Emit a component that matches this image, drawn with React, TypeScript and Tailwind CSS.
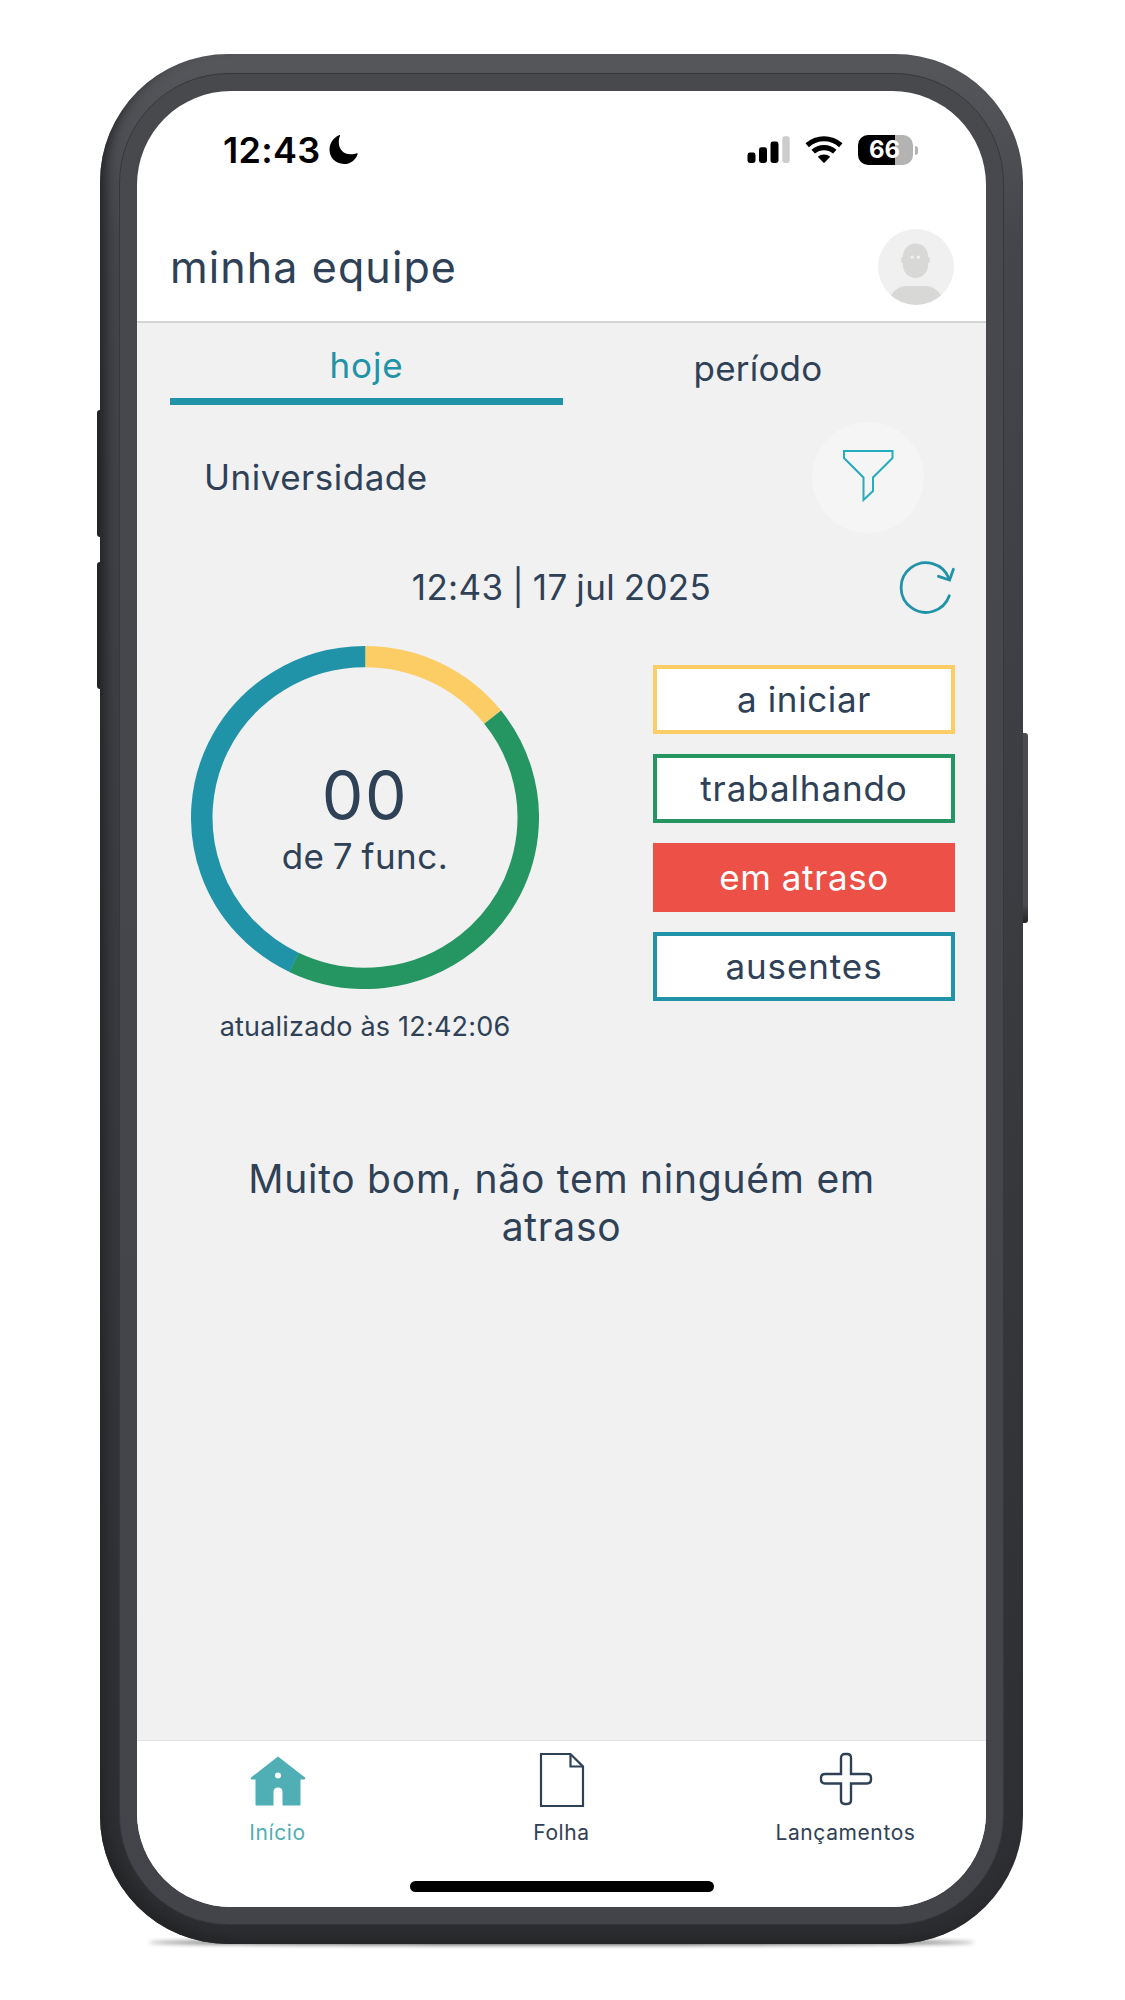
import React from "react";

const segments = [
  { color: "#fccd65", from: 0, size: 1 },
  { color: "#259661", from: 1, size: 3 },
  { color: "#2093a8", from: 4, size: 3 },
];

const filters = [
  { label: "a iniciar", style: "border-[#fccd65] bg-white tracking-[0.6px]" },
  { label: "trabalhando", style: "border-[#259661] bg-white tracking-[0.9px]" },
  { label: "em atraso", style: "border-[#ec5046] bg-[#ec5046] text-white tracking-[0.6px]" },
  { label: "ausentes", style: "border-[#2093a8] bg-white tracking-[0.9px]" },
];

const StatusBar: React.FC = () => {
  return (
    <div className="flex h-[118px] shrink-0 items-center justify-between pr-[68px] pl-[86px] text-black">
      <div className="flex items-center gap-[8px]">
        <span className="text-[36px] leading-none font-semibold tracking-[0.3px]">12:43</span>
        <svg width="29" height="30" viewBox="0 0 29 30">
          <path
            d="M11 0.8C10 3 9.8 5 9.8 7.5C9.8 14.5 14.8 19.3 21.5 19.3C24 19.3 26 19 27.6 18.3C28.3 18 28.9 18.5 28.6 19.2C26.5 25.3 21.3 29 15 29C6.6 29 0.5 22.8 0.5 14.6C0.5 8.3 4.2 2.7 10 0.2C10.7 -0.1 11.3 0.2 11 0.8Z"
            fill="#000"
          />
        </svg>
      </div>
      <div className="flex items-center">
        <svg width="44" height="28" viewBox="0 0 44 28">
          <rect x="0.5" y="16.5" width="8" height="10.5" rx="2.4" />
          <rect x="12" y="11.3" width="8" height="15.7" rx="2.4" />
          <rect x="23.5" y="5.5" width="8" height="21.5" rx="2.4" />
          <rect x="35.3" y="0.3" width="7.4" height="26.7" rx="2.4" fill="#ccc" />
        </svg>
        <svg className="ml-[14px]" width="38" height="28" viewBox="0 0 38 28">
          <g fill="none" stroke="#000" strokeWidth="5.2">
            <path d="M2.2 9.2C12 0.6 26 0.6 35.8 9.2" />
            <path d="M8.2 15.6C14.4 10.2 23.6 10.2 29.8 15.6" />
          </g>
          <path d="M12.8 20.7C16.4 17.6 21.6 17.6 25.2 20.7L19.7 26.6Q19 27.3 18.3 26.6Z" />
        </svg>
        <div className="ml-[15px] flex h-[30px] w-[55px] items-center justify-center rounded-[10px] bg-linear-to-r from-black from-67% to-[#b3b3b3] to-67% pr-[2px]">
          <span className="text-[24px] leading-none font-bold text-white">66</span>
        </div>
        <div className="ml-[2px] h-[9px] w-[3px] rounded-r-full bg-[#b3b3b3]" />
      </div>
    </div>
  );
};

const Avatar: React.FC = () => {
  return (
    <svg width="76" height="76" viewBox="0 0 76 76">
      <clipPath id="avatar">
        <circle cx="38" cy="38" r="38" />
      </clipPath>
      <g clipPath="url(#avatar)">
        <rect width="76" height="76" fill="#f0f0f0" />
        <g fill="#d8d8d6">
          <rect x="25" y="14.5" width="25" height="34.5" rx="12.5" />
          <ellipse cx="25" cy="31" rx="2" ry="3" />
          <ellipse cx="50" cy="31" rx="2" ry="3" />
          <path d="M12 68C16 61 21 57 28 57H48C55 57 60 61 64 68V76H12Z" />
        </g>
        <circle cx="34.2" cy="28.3" r="1.7" fill="#f0f0f0" />
        <circle cx="40.4" cy="28.3" r="1.7" fill="#f0f0f0" />
      </g>
    </svg>
  );
};

const Header: React.FC = () => {
  return (
    <header className="flex h-[114px] shrink-0 items-center justify-between border-b-2 border-[#d4d5d5] pt-1 pr-[32px] pl-[33px]">
      <h1 className="text-[43px] leading-none tracking-[1.1px]">minha equipe</h1>
      <Avatar />
    </header>
  );
};

const Tabs: React.FC = () => {
  return (
    <div className="mx-[33px] grid h-[82px] shrink-0 grid-cols-[393px_1fr] text-[35px] leading-none">
      <button className="flex items-center justify-center border-b-[7px] border-[#2093a8] pt-[10px] tracking-[0.8px] text-[#2093a8]">
        hoje
      </button>
      <button className="flex items-center justify-center pt-[9px] tracking-[0.2px]">período</button>
    </div>
  );
};

const Donut: React.FC = () => {
  const length = 2 * Math.PI * 163.25;

  return (
    <div className="relative h-[343px] w-[348px]">
      <svg width="348" height="343" viewBox="0 0 348 348" preserveAspectRatio="none">
        {segments.map((s) => (
          <circle
            key={s.color}
            cx="174"
            cy="174"
            r="163.25"
            fill="none"
            stroke={s.color}
            strokeWidth="21.5"
            strokeDasharray={`${(length * s.size) / 7} ${length}`}
            transform={`rotate(${(360 * s.from) / 7 - 90} 174 174)`}
          />
        ))}
      </svg>
      <div className="absolute inset-0 flex flex-col items-center justify-center gap-[10px]">
        <span className="text-[66px] leading-[66px] tracking-[1.5px]">00</span>
        <span className="text-[35px] leading-[36px] tracking-[0.5px] [word-spacing:-2px]">de 7 func.</span>
      </div>
    </div>
  );
};

const Content: React.FC = () => {
  return (
    <main className="flex min-h-0 flex-1 flex-col bg-[#f1f1f1]">
      <Tabs />
      <div className="mt-[17px] flex h-[111px] items-center justify-between pr-[62px] pl-[67px]">
        <span className="text-[35px] leading-none tracking-[0.5px]">Universidade</span>
        <button className="flex h-[111px] w-[112px] items-center justify-center rounded-full bg-[#f5f5f5] pb-[3px]">
          <svg width="52" height="54" viewBox="0 0 52 54" fill="none" stroke="#25acbd" strokeWidth="2">
            <path d="M2 2H50.5V9L31 28.5V42L21.5 51V28.5L2 9Z" />
          </svg>
        </button>
      </div>
      <div className="mt-[22px] grid h-[64px] grid-cols-[1fr_auto_1fr] items-center pr-[31px] pl-[31px]">
        <span />
        <span className="text-[35px] leading-none tracking-[0.35px] [word-spacing:-1.5px]">12:43 | 17 jul 2025</span>
        <button className="justify-self-end">
          <svg width="56" height="54" viewBox="0 0 56 54" fill="none" stroke="#2093a8" strokeWidth="2.8" strokeLinecap="round">
            <path d="M50.3 35.8A24.8 24.8 0 1 1 50 18.5" />
            <path d="M39.5 16.3L50.6 20L54.4 9.2" />
          </svg>
        </button>
      </div>
      <div className="mt-[27px] flex justify-between pr-[31px] pl-[54px]">
        <div className="flex flex-col items-center">
          <Donut />
          <p className="mt-[22px] text-[27px] leading-[32px] tracking-[0.2px]">atualizado às 12:42:06</p>
        </div>
        <div className="mt-[19px] flex w-[302px] flex-col gap-[20px]">
          {filters.map((f) => (
            <button
              key={f.label}
              className={`flex h-[69px] items-center justify-center border-[4px] text-[35px] leading-none ${f.style}`}
            >
              {f.label}
            </button>
          ))}
        </div>
      </div>
      <p className="mt-[112px] px-[60px] text-center text-[39px] leading-[47.5px] tracking-[0.75px]">
        Muito bom, não tem ninguém em
        <br />
        atraso
      </p>
    </main>
  );
};

const BottomNav: React.FC = () => {
  return (
    <nav className="flex h-[167px] shrink-0 flex-col items-center border-t border-[#e3e3e3] bg-white">
      <div className="grid w-full grid-cols-3 text-[21px] leading-[26px] tracking-[0.6px]">
        <a className="flex flex-col items-center gap-[12px] pt-[11px] pr-[2px] text-[#50aeb5]">
          <svg width="56" height="56" viewBox="0 0 56 56">
            <path
              fillRule="evenodd"
              d="M28 4.5L55 25.5Q56 27.5 54 27.5H50.5V52.5Q50.5 53.5 49.5 53.5H32.5V40Q32.5 35.5 28 35.5Q23.5 35.5 23.5 40V53.5H6.5Q5.5 53.5 5.5 52.5V27.5H2Q0 27.5 1 25.5ZM28 20.5A3 3 0 1 0 28 26.5A3 3 0 1 0 28 20.5Z"
              fill="#50aeb5"
            />
          </svg>
          Início
        </a>
        <a className="flex flex-col items-center gap-[12px] pt-[11px]">
          <svg width="46" height="56" viewBox="0 0 46 56" fill="none" stroke="#2f4156" strokeWidth="2.2">
            <path d="M2 2H31.5L44 14.5V54H2Z" />
            <path d="M31.5 2V14.5H44" />
          </svg>
          Folha
        </a>
        <a className="flex flex-col items-center gap-[12px] pt-[11px] pl-[2px]">
          <svg width="54" height="56" viewBox="0 0 54 56" fill="none" stroke="#2f4156" strokeWidth="2.4">
            <path d="M22 6Q22 2 26 2H28Q32 2 32 6V22H48Q52 22 52 26V27.5Q52 31.5 48 31.5H32V48Q32 52 28 52H26Q22 52 22 48V31.5H6Q2 31.5 2 27.5V26Q2 22 6 22H22Z" />
          </svg>
          Lançamentos
        </a>
      </div>
      <div className="mt-[35px] h-[11px] w-[304px] rounded-full bg-black" />
    </nav>
  );
};

const App: React.FC = () => {
  return (
    <div className="h-[2000px] w-[1125px] bg-white pt-[54px] pl-[100px] font-['Inter',sans-serif] text-[#2f4156]">
      <div className="relative h-[1890px] w-[923px]">
        {/* side buttons */}
        <div className="absolute top-[356px] -left-[3px] h-[127px] w-[8px] rounded-[3px] bg-[#222426]" />
        <div className="absolute top-[508px] -left-[3px] h-[127px] w-[8px] rounded-[3px] bg-[#222426]" />
        <div className="absolute top-[679px] -right-[5px] h-[190px] w-[9px] rounded-[3px] bg-linear-to-b from-[#4b4c50] from-90% to-[#222426]" />
        {/* ground shadow */}
        <div className="absolute right-[48px] -bottom-px left-[48px] h-[5px] rounded-[50%] bg-black/70 blur-[2px]" />
        <div className="relative h-full rounded-[128px] bg-linear-to-b from-[#55575b] via-[#45464b] via-10% to-[#2c2d30] p-[19px] shadow-[inset_8px_-8px_12px_-2px_#232527]">
          <div className="h-full rounded-[110px] border border-[#36373a] bg-linear-to-b from-[#48494d] to-[#434449] p-[17px]">
            <div className="flex h-full w-[849px] flex-col overflow-hidden rounded-[94px] bg-white">
              <StatusBar />
              <Header />
              <Content />
              <BottomNav />
            </div>
          </div>
        </div>
      </div>
    </div>
  );
};

export default App;
